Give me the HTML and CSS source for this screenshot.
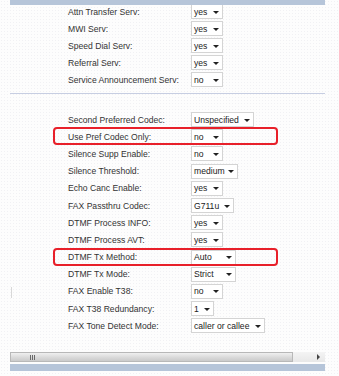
FILE: index.html
```html
<!DOCTYPE html>
<html>
<head>
<meta charset="utf-8">
<link rel="stylesheet" href="styles.css">
</head>
<body>
<div class="panel">
  <div class="topbar"></div>
  <div class="section first">
    <div class="row"><span class="label">Attn Transfer Serv:</span><span class="sel w32">yes<i class="arr"></i></span></div>
    <div class="row"><span class="label">MWI Serv:</span><span class="sel w32">yes<i class="arr"></i></span></div>
    <div class="row"><span class="label">Speed Dial Serv:</span><span class="sel w32">yes<i class="arr"></i></span></div>
    <div class="row"><span class="label">Referral Serv:</span><span class="sel w32">yes<i class="arr"></i></span></div>
    <div class="row"><span class="label">Service Announcement Serv:</span><span class="sel w32">no<i class="arr"></i></span></div>
  </div>
  <div class="divider"></div>
  <div class="section second">
    <div class="row r2"><span class="label">Second Preferred Codec:</span><span class="sel w63">Unspecified<i class="arr"></i></span></div>
    <div class="row r2"><span class="label">Use Pref Codec Only:</span><span class="sel w32">no<i class="arr"></i></span><span class="hl"></span></div>
    <div class="row r2"><span class="label">Silence Supp Enable:</span><span class="sel w32">no<i class="arr"></i></span></div>
    <div class="row r2"><span class="label">Silence Threshold:</span><span class="sel w47">medium<i class="arr"></i></span></div>
    <div class="row r2"><span class="label">Echo Canc Enable:</span><span class="sel w32">yes<i class="arr"></i></span></div>
    <div class="row r2"><span class="label">FAX Passthru Codec:</span><span class="sel w43">G711u<i class="arr"></i></span></div>
    <div class="row r2"><span class="label">DTMF Process INFO:</span><span class="sel w32">yes<i class="arr"></i></span></div>
    <div class="row r2"><span class="label">DTMF Process AVT:</span><span class="sel w32">yes<i class="arr"></i></span></div>
    <div class="row r2"><span class="label">DTMF Tx Method:</span><span class="sel w45">Auto<i class="arr"></i></span><span class="hl"></span></div>
    <div class="row r2"><span class="label">DTMF Tx Mode:</span><span class="sel w45">Strict<i class="arr"></i></span></div>
    <div class="row r2"><span class="label">FAX Enable T38:</span><span class="sel w32">no<i class="arr"></i></span></div>
    <div class="row r2"><span class="label">FAX T38 Redundancy:</span><span class="sel w23">1<i class="arr"></i></span></div>
    <div class="row r2"><span class="label">FAX Tone Detect Mode:</span><span class="sel w74">caller or callee<i class="arr"></i></span></div>
  </div>
  <div class="hscroll">
    <div class="thumb"><span class="grip"></span></div>
    <div class="track"><span class="rarr"></span></div>
  </div>
  <div class="bottombar"></div>
</div>
<div class="edge-mark"></div>
</body>
</html>
```
FILE: styles.css
```css
html, body {
  margin: 0;
  padding: 0;
}
body {
  width: 339px;
  height: 376px;
  overflow: hidden;
  position: relative;
  background-color: #fdfdfd;
  background-image: radial-gradient(circle, #f1f1f4 0.7px, transparent 0.9px);
  background-size: 3px 3px;
  font-family: "Liberation Sans", Arial, sans-serif;
  font-size: 8.6px;
  color: #333;
}
.panel {
  margin-left: 10px;
  width: 315px;
}
.topbar {
  position: relative;
  z-index: 1;
  height: 5px;
  background: #b6c5d9;
}
.section.first {
  margin-top: -2px;
}
.row {
  position: relative;
  height: 17px;
  display: grid;
  grid-template-columns: 123px auto;
  align-items: center;
  padding-left: 58px;
}
.row.r2 {
  height: 17.2px;
}
.label {
  white-space: nowrap;
  color: #333;
}
.sel {
  box-sizing: border-box;
  height: 15px;
  border: 1px solid #d4d4d4;
  background: #fff;
  display: flex;
  align-items: center;
  justify-content: space-between;
  padding: 0 3px 0 2px;
  color: #222;
  white-space: nowrap;
  justify-self: start;
}
.arr {
  width: 0;
  height: 0;
  border-top: 3px solid #222;
  border-left: 3px solid transparent;
  border-right: 3px solid transparent;
  margin-top: 1px;
}
.w32 { width: 32px; }
.w63 { width: 63px; }
.w47 { width: 47px; }
.w43 { width: 43px; }
.w45 { width: 45px; }
.w23 { width: 23px; }
.w74 { width: 74px; }
.hl {
  position: absolute;
  left: 43px;
  top: -1px;
  width: 225px;
  height: 18px;
  box-sizing: border-box;
  border: 2px solid #e8202a;
  border-radius: 4px;
}
.divider {
  margin-top: 5px;
  height: 1px;
  background: #c7cee2;
}
.section.second {
  padding-top: 17px;
}
.hscroll {
  margin-top: 18px;
  height: 10px;
  display: flex;
}
.thumb {
  width: 283px;
  box-sizing: border-box;
  border: 1px solid #b8b8b8;
  background: linear-gradient(#f0f0f0, #d8d8d8 60%, #cbcbcb);
  position: relative;
  display: flex;
  align-items: center;
  padding-left: 19px;
}
.grip {
  width: 6px;
  height: 5px;
  background: repeating-linear-gradient(90deg, #6a6a6a 0 1px, transparent 1px 2px);
}
.track {
  flex: 1;
  background: linear-gradient(#f4f4f4, #e8e8e8);
  display: flex;
  align-items: center;
  justify-content: flex-end;
  padding-right: 5px;
}
.rarr {
  width: 0;
  height: 0;
  border-left: 3px solid #444;
  border-top: 3px solid transparent;
  border-bottom: 3px solid transparent;
}
.bottombar {
  margin-top: 2px;
  height: 7px;
  background: #b6c5d9;
}
.edge-mark {
  position: absolute;
  left: 11px;
  top: 287px;
  width: 1px;
  height: 11px;
  background: #d8d8d8;
}
```
